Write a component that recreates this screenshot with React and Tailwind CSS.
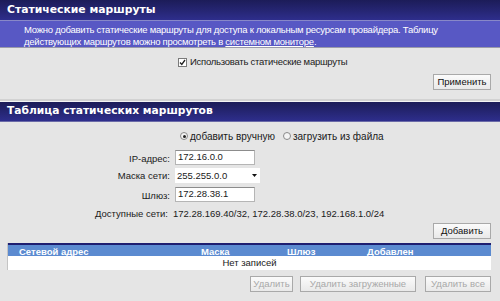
import React from "react";

const Btn = ({ children, disabled, className = "" }) => (
  <div
    className={`h-[16px] border border-[#a9a9a9] bg-gradient-to-b from-[#fbfbfb] to-[#e9e9e9] flex items-center justify-center text-[9.5px] leading-none ${disabled ? "text-[#a8a8a8]" : "text-[#111]"} ${className}`}
  >
    {children}
  </div>
);

const Radio = ({ checked }) => (
  <div className="w-[8px] h-[8px] rounded-full border border-[#8a8a8a] bg-[#f4f4f4] flex items-center justify-center">
    {checked && <div className="w-[3px] h-[3px] rounded-full bg-[#222]" />}
  </div>
);

export default function App() {
  return (
    <div className="w-[500px] h-[301px] overflow-hidden bg-[#e5e5e5] text-[#1a1a1a] font-['Liberation_Sans',Arial,sans-serif] flex flex-col">
      {/* Header 1 */}
      <div className="h-[21px] shrink-0 bg-gradient-to-b from-[#1c1c58] to-[#2e2e8c] border-b border-[#8888c8] flex items-center pl-[7px] text-white font-['DejaVu_Sans',sans-serif] font-bold text-[10.8px]">
        Статические маршруты
      </div>
      <div className="h-[27px] shrink-0 bg-[#5858c4] text-white text-[9.5px] tracking-[-0.25px] leading-[12px] pl-[24px] pt-[3px] border-b border-[#9a9aa8]">
        Можно добавить статические маршруты для доступа к локальным ресурсам провайдера. Таблицу
        <br />
        действующих маршрутов можно просмотреть в <span className="underline">системном мониторе</span>.
      </div>
      <div className="h-[51px] shrink-0 flex flex-col pt-[8px] pr-[9px]">
        <div className="flex items-center pl-[178px] gap-[3px] h-[12px]">
          <div className="w-[9px] h-[9px] border border-[#7a7a7a] bg-white flex items-center justify-center">
            <svg width="7" height="7" viewBox="0 0 7 7">
              <path d="M1 3.5 L2.8 5.5 L6 1" stroke="#222" strokeWidth="1.3" fill="none" />
            </svg>
          </div>
          <span className="text-[9.5px] tracking-[-0.25px]">Использовать статические маршруты</span>
        </div>
        <div className="flex justify-end mt-[6px]">
          <Btn className="w-[58px]">Применить</Btn>
        </div>
      </div>
      <div className="h-[2px] shrink-0 bg-[#d2d2d2]" />
      <div className="h-[1px] shrink-0 bg-[#f4f4f4]" />
      {/* Header 2 */}
      <div className="h-[20px] shrink-0 bg-gradient-to-b from-[#1c1c58] to-[#2e2e8c] flex items-center pl-[7px] text-white font-['DejaVu_Sans',sans-serif] font-bold text-[10.7px] border-b border-[#6a6aa8]">
        Таблица статических маршрутов
      </div>
      <div className="flex-1 flex flex-col text-[9.5px]">
        <div className="flex items-center h-[12px] mt-[8px] pl-[180px] text-[10px]">
          <Radio checked />
          <span className="ml-[2px]">добавить вручную</span>
          <div className="ml-[8px]"><Radio /></div>
          <span className="ml-[2px]">загрузить из файла</span>
        </div>
        <div className="grid grid-cols-[170px_1fr] gap-x-[5px] items-center mt-[6px] gap-y-[2px]">
          <div className="text-right pt-[4px]">IP-адрес:</div>
          <div className="w-[80px] h-[15px] bg-white border border-[#b5b5b5] border-t-[#8c8c8c] px-[2px] flex items-center">172.16.0.0</div>
          <div className="text-right">Маска сети:</div>
          <div className="w-[85px] h-[15px] bg-white flex items-center pl-[2px] justify-between pr-[3px]">
            <span>255.255.0.0</span>
            <svg width="5" height="3" viewBox="0 0 5 3"><path d="M0 0 H5 L2.5 3 Z" fill="#111" /></svg>
          </div>
          <div className="text-right pt-[4px]">Шлюз:</div>
          <div className="w-[80px] h-[15px] bg-white border border-[#b5b5b5] border-t-[#8c8c8c] px-[2px] flex items-center">172.28.38.1</div>
        </div>
        <div className="grid grid-cols-[168px_1fr] gap-x-[5px] mt-[3px]">
          <div className="text-right">Доступные сети:</div>
          <div>172.28.169.40/32, 172.28.38.0/23, 192.168.1.0/24</div>
        </div>
        <div className="flex justify-end pr-[9px] mt-[2px]">
          <Btn className="w-[58px]">Добавить</Btn>
        </div>
        <div className="ml-[7px] mr-[9px] mt-[4px] border-l border-[#c4c4c4]">
          <div className="h-[2px] bg-[#1e1e70]" />
          <div className="h-[11px] bg-[#5b8ad0] grid grid-cols-[193px_86px_80px_1fr] text-white font-bold items-center text-[9.5px]">
            <span className="pl-[11px]">Сетевой адрес</span>
            <span>Маска</span>
            <span>Шлюз</span>
            <span>Добавлен</span>
          </div>
          <div className="h-[14px] bg-white flex items-center justify-center">Нет записей</div>
        </div>
        <div className="flex justify-end pr-[9px] mt-[6px]">
          <Btn disabled className="w-[43px]">Удалить</Btn>
          <Btn disabled className="w-[116px] ml-[7px]">Удалить загруженные</Btn>
          <Btn disabled className="w-[66px] ml-[9px]">Удалить все</Btn>
        </div>
      </div>
    </div>
  );
}
